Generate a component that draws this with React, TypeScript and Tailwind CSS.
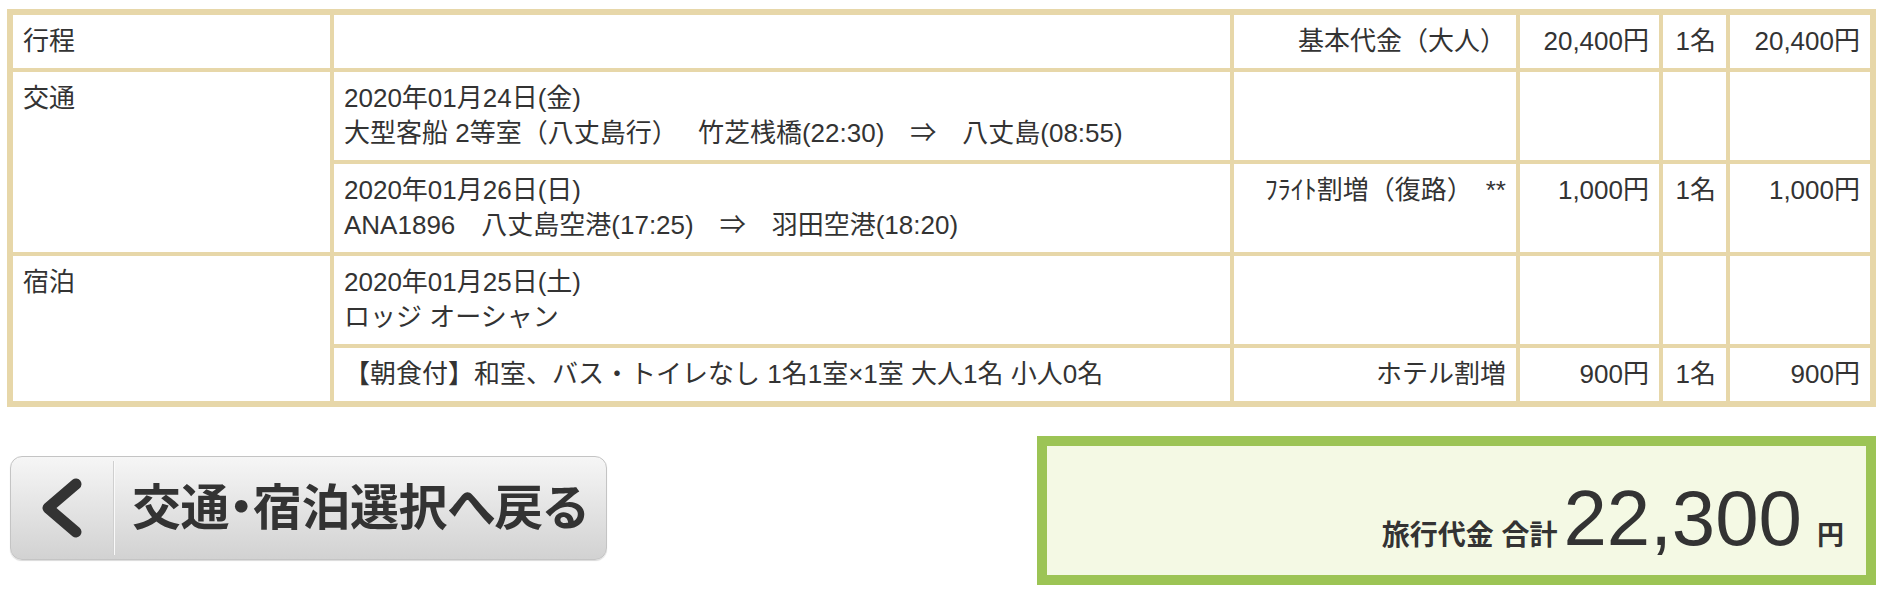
import React from "react";

const cell = "bg-white px-[10px] py-[9px] leading-[35px] text-[26px] text-[#333]";

function Chevron() {
  return (
    <svg width="60" height="68" viewBox="0 0 60 68" className="block">
      <polyline
        points="46,10 18,34 46,58"
        fill="none"
        stroke="#333"
        strokeWidth="11"
        strokeLinecap="round"
        strokeLinejoin="round"
      />
    </svg>
  );
}

export default function App() {
  return (
    <div className="w-[1886px] h-[596px] bg-white pt-[9px] pl-[7px] font-['Liberation_Sans','Noto_Sans_CJK_JP',sans-serif]">
      <div className="grid w-[1869px] grid-cols-[317px_896px_282px_139px_63px_140px] gap-[4px] bg-[#e7d7a9] p-[6px]">
        {/* Row 1 */}
        <div className={cell}>行程</div>
        <div className={cell}></div>
        <div className={`${cell} text-right`}>基本代金（大人）</div>
        <div className={`${cell} text-right`}>20,400円</div>
        <div className={`${cell} text-right`}>1名</div>
        <div className={`${cell} text-right`}>20,400円</div>

        {/* Row 2 */}
        <div className={`${cell} row-span-2`}>交通</div>
        <div className={cell}>
          <div>2020年01月24日(金)</div>
          <div className="whitespace-pre">大型客船 2等室（八丈島行）　 竹芝桟橋(22:30)　⇒　八丈島(08:55)</div>
        </div>
        <div className={cell}></div>
        <div className={cell}></div>
        <div className={cell}></div>
        <div className={cell}></div>

        {/* Row 3 */}
        <div className={cell}>
          <div>2020年01月26日(日)</div>
          <div className="whitespace-pre">ANA1896　八丈島空港(17:25)　⇒　羽田空港(18:20)</div>
        </div>
        <div className={`${cell} text-right`}>ﾌﾗｲﾄ割増（復路）　**</div>
        <div className={`${cell} text-right`}>1,000円</div>
        <div className={`${cell} text-right`}>1名</div>
        <div className={`${cell} text-right`}>1,000円</div>

        {/* Row 4 */}
        <div className={`${cell} row-span-2`}>宿泊</div>
        <div className={cell}>
          <div>2020年01月25日(土)</div>
          <div>ロッジ オーシャン</div>
        </div>
        <div className={cell}></div>
        <div className={cell}></div>
        <div className={cell}></div>
        <div className={cell}></div>

        {/* Row 5 */}
        <div className={cell}>【朝食付】和室、バス・トイレなし 1名1室×1室 大人1名 小人0名</div>
        <div className={`${cell} text-right`}>ホテル割増</div>
        <div className={`${cell} text-right`}>900円</div>
        <div className={`${cell} text-right`}>1名</div>
        <div className={`${cell} text-right`}>900円</div>
      </div>

      <div className="mt-[29px] flex w-[1869px] items-start justify-between">
        <button
          type="button"
          className="ml-[3px] mt-[20px] flex h-[104px] w-[597px] items-stretch overflow-hidden rounded-[12px] border border-[#c4c4c4] bg-gradient-to-b from-[#f6f6f6] to-[#d2d2d2] shadow-[0_1px_1px_rgba(0,0,0,0.15)]"
        >
          <div className="flex w-[102px] items-center pl-[19px]">
            <Chevron />
          </div>
          <div className="my-[4px] w-[1px] bg-[#cfcfcf]" />
          <div className="my-[4px] w-[1px] bg-[#fafafa]" />
          <div className="flex flex-1 items-center whitespace-nowrap pl-[17px] text-[49px] font-bold leading-none tracking-[-0.5px] text-[#333] [font-feature-settings:'palt']">
            交通・宿泊選択へ戻る
          </div>
        </button>

        <div className="flex h-[149px] w-[839px] items-end justify-end border-[10px] border-[#9cc455] bg-[#f4f9e4] pb-[18px] pr-[22px]">
          <div className="flex items-baseline text-[#333]">
            <span className="text-[28px] font-bold [font-feature-settings:'palt']">旅行代金 合計</span>
            <span className="ml-[6px] text-[78px] leading-none">22,300</span>
            <span className="ml-[15px] text-[27px] font-bold">円</span>
          </div>
        </div>
      </div>
    </div>
  );
}
